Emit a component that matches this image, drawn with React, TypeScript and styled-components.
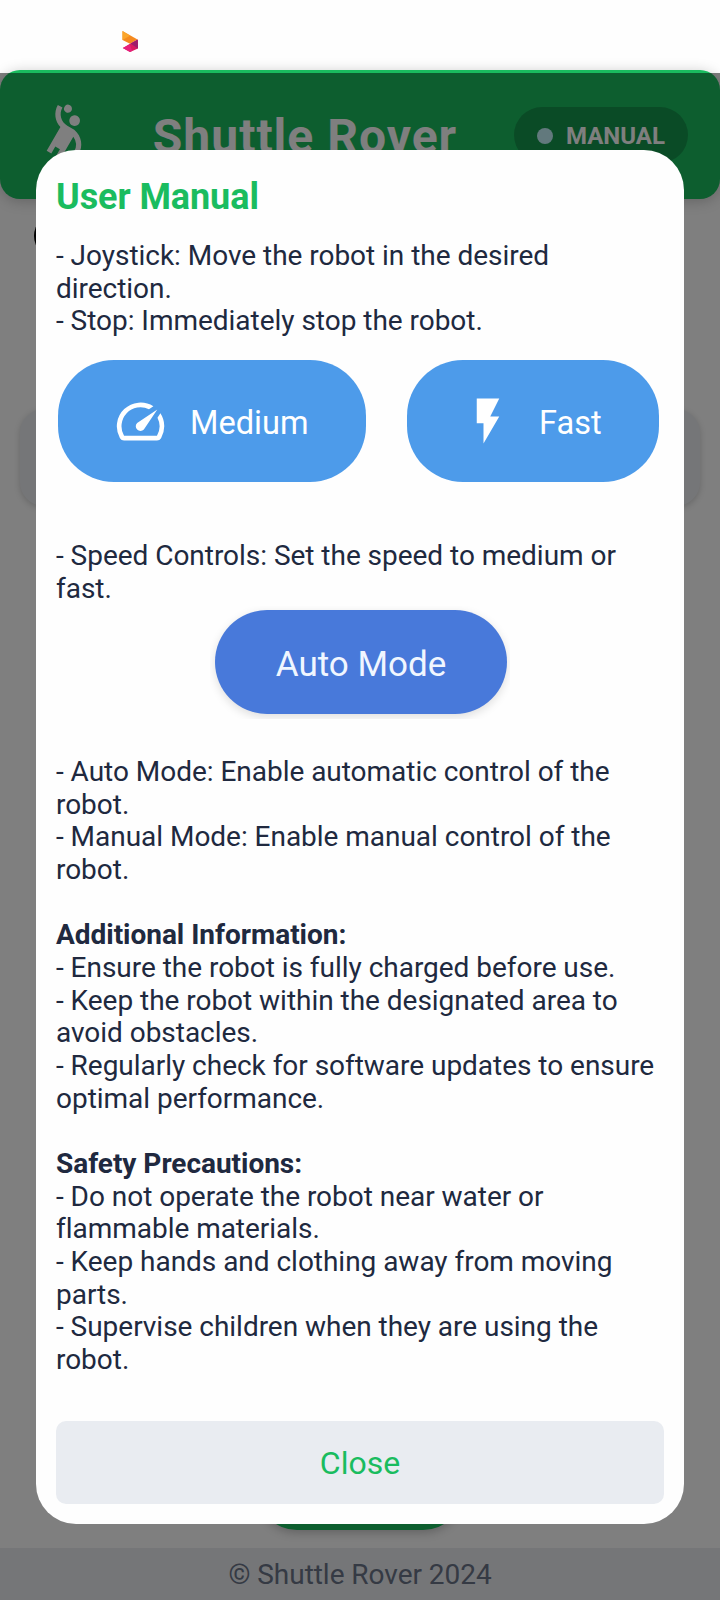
import React from "react";
import styled, { createGlobalStyle } from "styled-components";
import { MdSportsHandball, MdSpeed, MdFlashOn } from "react-icons/md";

const GlobalStyle = createGlobalStyle`
  * { box-sizing: border-box; }
  body { margin: 0; background: #fff; font-family: Roboto, sans-serif; }
`;

const Screen = styled.div`
  position: relative;
  width: 720px;
  height: 1600px;
  overflow: hidden;
  display: flex;
  flex-direction: column;
  background: #fefefe;
`;

const StatusBar = styled.div`
  height: 70px;
  flex: none;
  padding: 31px 0 0 122px;
`;

const Header = styled.header`
  height: 129px;
  flex: none;
  padding: 0 32px;
  display: flex;
  align-items: center;
  justify-content: space-between;
  border-radius: 20px;
  background: #1abc5f;
  color: #fff;
  box-shadow: 0 2px 14px rgba(0, 0, 0, 0.22);
`;

const PlayerIcon = styled(MdSportsHandball)`
  margin-bottom: 1px;
`;

const HeaderTitle = styled.h1`
  margin: 5px 0 0;
  font-size: 48px;
  line-height: 56px;
  font-weight: 700;
  letter-spacing: 1px;
  white-space: nowrap;
`;

const ModeBadge = styled.div`
  width: 174px;
  height: 56px;
  padding-top: 2px;
  border-radius: 28px;
  display: flex;
  align-items: center;
  justify-content: center;
  gap: 13px;
  background: rgba(0, 0, 0, 0.2);
  font-size: 24px;
  font-weight: 700;
`;

const ModeDot = styled.span`
  width: 16px;
  height: 16px;
  border-radius: 50%;
  background: #c4f2fa;
`;

const Controls = styled.main`
  flex: 1;
  padding: 14px 20px 18px;
  display: flex;
  flex-direction: column;
`;

const InfoButton = styled.div`
  width: 46px;
  height: 46px;
  margin-left: 14px;
  border-radius: 50%;
  background: #000;
`;

const StatusPanel = styled.div`
  height: 97px;
  margin-top: 150px;
  border-radius: 24px;
  background: #ebedf1;
  box-shadow: 0 2px 6px rgba(0, 0, 0, 0.18);
`;

const ModeButton = styled.div`
  width: 206px;
  height: 80px;
  margin: auto auto 0;
  border-radius: 40px;
  background: #1abc5f;
  box-shadow: 0 3px 10px rgba(0, 0, 0, 0.22);
`;

const Footer = styled.footer`
  height: 52px;
  flex: none;
  display: flex;
  align-items: center;
  justify-content: center;
  background: #ebedf1;
  color: #6b7488;
  font-size: 28px;
  letter-spacing: -0.04px;
`;

const Scrim = styled.div`
  position: absolute;
  inset: 73px 0 0;
  padding: 77px 36px 76px;
  display: flex;
  background: rgba(0, 0, 0, 0.5);
`;

const Modal = styled.section`
  flex: 1;
  padding: 26px 20px 20px;
  display: flex;
  flex-direction: column;
  border-radius: 40px;
  background: #fefefe;
  color: #20293f;
`;

const ModalTitle = styled.h2`
  margin: 0 0 22px;
  color: #1abc5f;
  font-size: 36px;
  line-height: 42px;
  font-weight: 700;
  letter-spacing: -0.08px;
`;

const Copy = styled.p<{ $height: number; $top?: number }>`
  margin: 0;
  padding-top: ${(p) => p.$top ?? 0}px;
  height: ${(p) => p.$height}px;
  font-size: 28px;
  line-height: 32.65px;
  letter-spacing: -0.03px;
  white-space: nowrap;
`;

const SpeedRow = styled.div`
  height: 122px;
  padding: 0 5px 0 2px;
  display: flex;
  justify-content: space-between;
`;

const SpeedButton = styled.div<{ $width: number; $gap: number; $inset: number }>`
  width: ${(p) => p.$width}px;
  height: 122px;
  padding-left: ${(p) => p.$inset}px;
  display: flex;
  align-items: center;
  gap: ${(p) => p.$gap}px;
  border-radius: 56px;
  background: #4d9bea;
  color: #fff;
  font-size: 32.6px;
`;

const SpeedLabel = styled.span`
  padding-top: 3px;
`;

const AutoFrame = styled.div`
  width: 300px;
  height: 113px;
  margin: 0 auto;
  padding: 4px 3px 0 5px;
  overflow: hidden;
`;

const AutoButton = styled.div`
  height: 104px;
  border-radius: 52px;
  display: flex;
  align-items: center;
  justify-content: center;
  background: #4879da;
  box-shadow: 0 3px 10px rgba(0, 0, 0, 0.13);
  color: #f0f6ff;
  font-size: 35px;
  padding-top: 4px;
`;

const CloseButton = styled.button`
  height: 83px;
  margin-top: auto;
  border: 0;
  border-radius: 10px;
  background: #e9ecf1;
  color: #1abc5f;
  font: 400 32px Roboto, sans-serif;
  padding-top: 2px;
`;

const RibbonLogo = () => (
  <svg width="17" height="22" viewBox="0 0 17 22" display="block">
    <path d="M0.5 0L15.5 8.5L8 12.8L0.5 9Z" fill="#f58a1f" />
    <path d="M0.5 0L8 4.7L0.5 9Z" fill="#fba62b" />
    <path d="M15.8 8.5L16 17.5L8 21L0.8 17L8 12.8Z" fill="#d81b60" />
    <path d="M15.8 8.5L16 17.5L8.5 12.5Z" fill="#9c1c6b" />
    <path d="M0.8 17L8 13.5L10 20L8 21Z" fill="#e8207c" />
  </svg>
);

export default function App() {
  return (
    <>
      <GlobalStyle />
      <Screen>
        <StatusBar><RibbonLogo /></StatusBar>
        <Header>
          <PlayerIcon size={64} />
          <HeaderTitle>Shuttle Rover</HeaderTitle>
          <ModeBadge><ModeDot />MANUAL</ModeBadge>
        </Header>
        <Controls>
          <InfoButton />
          <StatusPanel />
          <ModeButton />
        </Controls>
        <Footer>© Shuttle Rover 2024</Footer>
        <Scrim>
          <Modal>
            <ModalTitle>User Manual</ModalTitle>
            <Copy $height={120}>
              - Joystick: Move the robot in the desired<br />direction.<br />
              - Stop: Immediately stop the robot.
            </Copy>
            <SpeedRow>
              <SpeedButton $width={308} $inset={54} $gap={21}>
                <MdSpeed size={57} /><SpeedLabel>Medium</SpeedLabel>
              </SpeedButton>
              <SpeedButton $width={252} $inset={54} $gap={24}>
                <MdFlashOn size={54} /><SpeedLabel>Fast</SpeedLabel>
              </SpeedButton>
            </SpeedRow>
            <Copy $height={124} $top={58}>
              - Speed Controls: Set the speed to medium or<br />fast.
            </Copy>
            <AutoFrame><AutoButton>Auto Mode</AutoButton></AutoFrame>
            <Copy $height={660} $top={37}>
              - Auto Mode: Enable automatic control of the<br />robot.<br />
              - Manual Mode: Enable manual control of the<br />robot.<br />
              <br />
              <b>Additional Information:</b><br />
              - Ensure the robot is fully charged before use.<br />
              - Keep the robot within the designated area to<br />avoid obstacles.<br />
              - Regularly check for software updates to ensure<br />optimal performance.<br />
              <br />
              <b>Safety Precautions:</b><br />
              - Do not operate the robot near water or<br />flammable materials.<br />
              - Keep hands and clothing away from moving<br />parts.<br />
              - Supervise children when they are using the<br />robot.
            </Copy>
            <CloseButton>Close</CloseButton>
          </Modal>
        </Scrim>
      </Screen>
    </>
  );
}
